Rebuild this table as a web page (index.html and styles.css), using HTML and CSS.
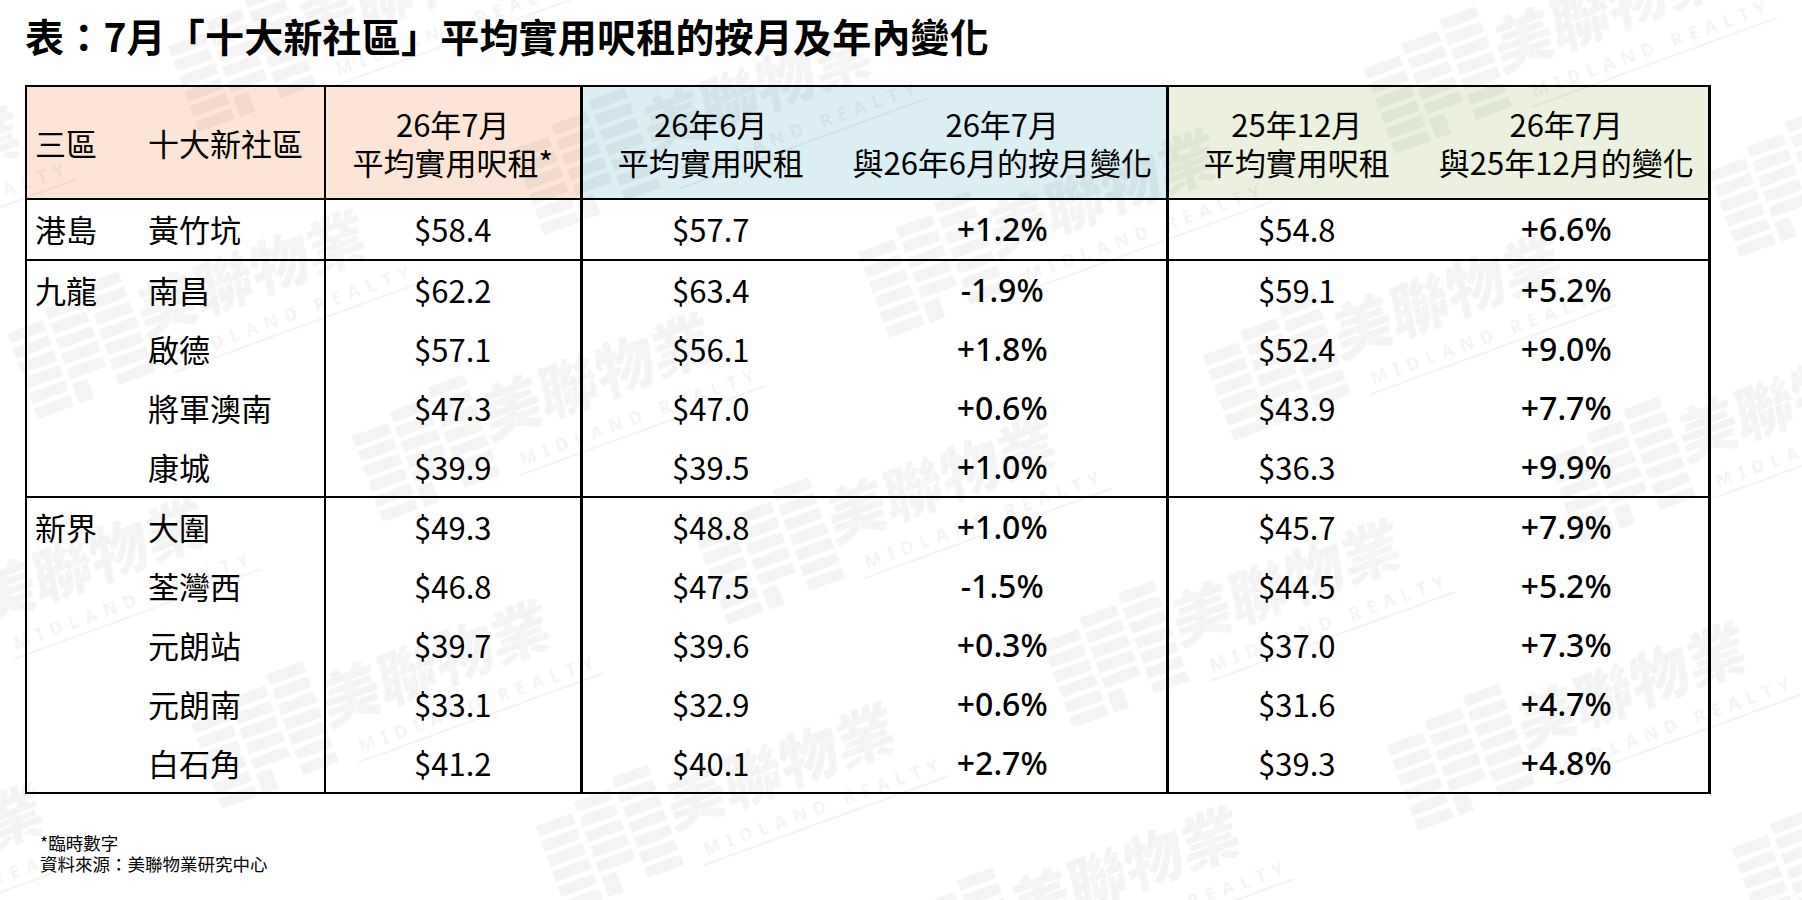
FILE: index.html
```html
<!DOCTYPE html>
<html lang="zh-Hant">
<head>
<meta charset="utf-8">
<title>7月十大新社區平均實用呎租</title>
<link rel="stylesheet" href="styles.css">
</head>
<body>
<div class="page">
  <h1 class="title">表：7月「十大新社區」平均實用呎租的按月及年內變化</h1>
  <table class="rent">
    <colgroup>
      <col class="w-area"><col class="w-name"><col class="w-jul"><col class="w-jun"><col class="w-mom"><col class="w-dec"><col class="w-ytd">
    </colgroup>
    <thead>
      <tr class="head">
        <th class="peach left">三區</th>
        <th class="peach left">十大新社區</th>
        <th class="peach bl">26年7月<br>平均實用呎租*</th>
        <th class="blue blk">26年6月<br>平均實用呎租</th>
        <th class="blue">26年7月<br>與26年6月的按月變化</th>
        <th class="green blk">25年12月<br>平均實用呎租</th>
        <th class="green brk">26年7月<br>與25年12月的變化</th>
      </tr>
    </thead>
    <tbody>
      <tr><td class="left">港島</td><td class="left">黃竹坑</td><td class="bl">$58.4</td><td class="blk">$57.7</td><td class="pct">+1.2%</td><td class="blk">$54.8</td><td class="pct brk">+6.6%</td></tr>
    </tbody>
    <tbody>
      <tr><td class="left">九龍</td><td class="left">南昌</td><td class="bl">$62.2</td><td class="blk">$63.4</td><td class="pct">-1.9%</td><td class="blk">$59.1</td><td class="pct brk">+5.2%</td></tr>
      <tr><td class="left"></td><td class="left">啟德</td><td class="bl">$57.1</td><td class="blk">$56.1</td><td class="pct">+1.8%</td><td class="blk">$52.4</td><td class="pct brk">+9.0%</td></tr>
      <tr><td class="left"></td><td class="left">將軍澳南</td><td class="bl">$47.3</td><td class="blk">$47.0</td><td class="pct">+0.6%</td><td class="blk">$43.9</td><td class="pct brk">+7.7%</td></tr>
      <tr><td class="left"></td><td class="left">康城</td><td class="bl">$39.9</td><td class="blk">$39.5</td><td class="pct">+1.0%</td><td class="blk">$36.3</td><td class="pct brk">+9.9%</td></tr>
    </tbody>
    <tbody>
      <tr><td class="left">新界</td><td class="left">大圍</td><td class="bl">$49.3</td><td class="blk">$48.8</td><td class="pct">+1.0%</td><td class="blk">$45.7</td><td class="pct brk">+7.9%</td></tr>
      <tr><td class="left"></td><td class="left">荃灣西</td><td class="bl">$46.8</td><td class="blk">$47.5</td><td class="pct">-1.5%</td><td class="blk">$44.5</td><td class="pct brk">+5.2%</td></tr>
      <tr><td class="left"></td><td class="left">元朗站</td><td class="bl">$39.7</td><td class="blk">$39.6</td><td class="pct">+0.3%</td><td class="blk">$37.0</td><td class="pct brk">+7.3%</td></tr>
      <tr><td class="left"></td><td class="left">元朗南</td><td class="bl">$33.1</td><td class="blk">$32.9</td><td class="pct">+0.6%</td><td class="blk">$31.6</td><td class="pct brk">+4.7%</td></tr>
      <tr><td class="left"></td><td class="left">白石角</td><td class="bl">$41.2</td><td class="blk">$40.1</td><td class="pct">+2.7%</td><td class="blk">$39.3</td><td class="pct brk">+4.8%</td></tr>
    </tbody>
  </table>
  <div class="notes">
    <p>*臨時數字</p>
    <p>資料來源：美聯物業研究中心</p>
  </div>

  <svg class="wm" width="1802" height="900" viewBox="0 0 1802 900" aria-hidden="true">
    <defs>
      <g id="mark">
        <g class="wm-logo">
          <rect x="-250" y="-30" width="38" height="11"/><rect x="-250" y="-14" width="38" height="11"/><rect x="-250" y="2" width="38" height="11"/><rect x="-250" y="18" width="38" height="11"/><rect x="-250" y="34" width="38" height="11"/><rect x="-250" y="50" width="38" height="11"/>
          <rect x="-206" y="-40" width="38" height="11"/><rect x="-206" y="-24" width="38" height="11"/><rect x="-206" y="-8" width="38" height="11"/><rect x="-206" y="8" width="38" height="11"/><rect x="-206" y="24" width="38" height="11"/><rect x="-206" y="40" width="16" height="21"/>
          <rect x="-162" y="-50" width="38" height="11"/><rect x="-162" y="-34" width="38" height="11"/><rect x="-162" y="-18" width="38" height="11"/><rect x="-162" y="-2" width="38" height="11"/><rect x="-162" y="14" width="38" height="11"/><rect x="-162" y="30" width="38" height="11"/><rect x="-162" y="46" width="38" height="11"/>
        </g>
        <text class="wm-cn" x="0" y="20" text-anchor="middle" transform="skewX(-8)">美聯物業</text>
        <text class="wm-en" x="-100" y="56">MIDLAND REALTY</text>
        <rect x="-106" y="63" width="262" height="2"/>
      </g>
    </defs>
    <g class="wm-layer">
      <use href="#mark" transform="translate(1609 11) rotate(-20)"/>
      <use href="#mark" transform="translate(1954 114) rotate(-20)"/>
      <use href="#mark" transform="translate(413 -11) rotate(-20)"/>
      <use href="#mark" transform="translate(758 92) rotate(-20)"/>
      <use href="#mark" transform="translate(1103 195) rotate(-20)"/>
      <use href="#mark" transform="translate(1448 298) rotate(-20)"/>
      <use href="#mark" transform="translate(1793 401) rotate(-20)"/>
      <use href="#mark" transform="translate(-93 173) rotate(-20)"/>
      <use href="#mark" transform="translate(252 276) rotate(-20)"/>
      <use href="#mark" transform="translate(597 379) rotate(-20)"/>
      <use href="#mark" transform="translate(942 482) rotate(-20)"/>
      <use href="#mark" transform="translate(1287 585) rotate(-20)"/>
      <use href="#mark" transform="translate(1632 688) rotate(-20)"/>
      <use href="#mark" transform="translate(1977 791) rotate(-20)"/>
      <use href="#mark" transform="translate(91 563) rotate(-20)"/>
      <use href="#mark" transform="translate(436 666) rotate(-20)"/>
      <use href="#mark" transform="translate(781 769) rotate(-20)"/>
      <use href="#mark" transform="translate(1126 872) rotate(-20)"/>
      <use href="#mark" transform="translate(1471 975) rotate(-20)"/>
      <use href="#mark" transform="translate(-70 850) rotate(-20)"/>
    </g>
  </svg>
</div>
</body>
</html>
```

FILE: styles.css
```css
html, body {
  margin: 0;
  padding: 0;
  background: #ffffff;
}

.page {
  position: relative;
  width: 1802px;
  height: 900px;
  overflow: hidden;
  box-sizing: border-box;
  padding: 12px 0 0 25px;
  font-family: "Noto Sans CJK TC", "Noto Sans", sans-serif;
  color: #000;
}

.title {
  margin: 0 0 27px 0;
  font-size: 39px;
  line-height: 46px;
  font-weight: 700;
  letter-spacing: 0.2px;
  white-space: nowrap;
}

.rent {
  border-collapse: collapse;
  table-layout: fixed;
  width: 1683px;
  border: 2px solid #000;
  font-size: 31px;
}

.w-area { width: 114px; }
.w-name { width: 185px; }
.w-jul  { width: 256px; }
.w-jun  { width: 258px; }
.w-mom  { width: 328px; }
.w-dec  { width: 258px; }
.w-ytd  { width: 284px; }

.rent thead { border-bottom: 2px solid #000; }
.rent tbody { border-top: 2px solid #000; }

.rent th {
  height: 111px;
  padding: 0;
  font-weight: 400;
  line-height: 38px;
  text-align: center;
  vertical-align: middle;
}

.rent td {
  height: 58.8px;
  padding: 0;
  line-height: 40px;
  text-align: center;
  vertical-align: middle;
  white-space: nowrap;
}

.rent .left {
  text-align: left;
  padding-left: 8px;
}

.rent .pct {
  font-family: "Noto Sans", sans-serif;
  font-size: 32px;
  font-weight: 500;
}

.bl  { border-left: 2px solid #000; }
.blk { border-left: 3px solid #000; }
.brk { border-right: 3px solid #000; }

.peach { background: #fce4d6; }
.blue  { background: #daeef3; }
.green { background: #ebf1de; }

.notes {
  margin-top: 38px;
  padding-left: 15px;
  font-size: 17.5px;
  line-height: 21px;
}

.notes p { margin: 0; }

.wm {
  position: absolute;
  left: 0;
  top: 0;
  pointer-events: none;
}

.wm-layer {
  fill: #000;
  opacity: 0.045;
}

.wm-cn {
  font-family: "Noto Sans CJK TC", sans-serif;
  font-size: 60px;
  font-weight: 900;
}

.wm-en {
  font-family: "Noto Sans", sans-serif;
  font-size: 18px;
  font-weight: 700;
  letter-spacing: 7px;
}
```
